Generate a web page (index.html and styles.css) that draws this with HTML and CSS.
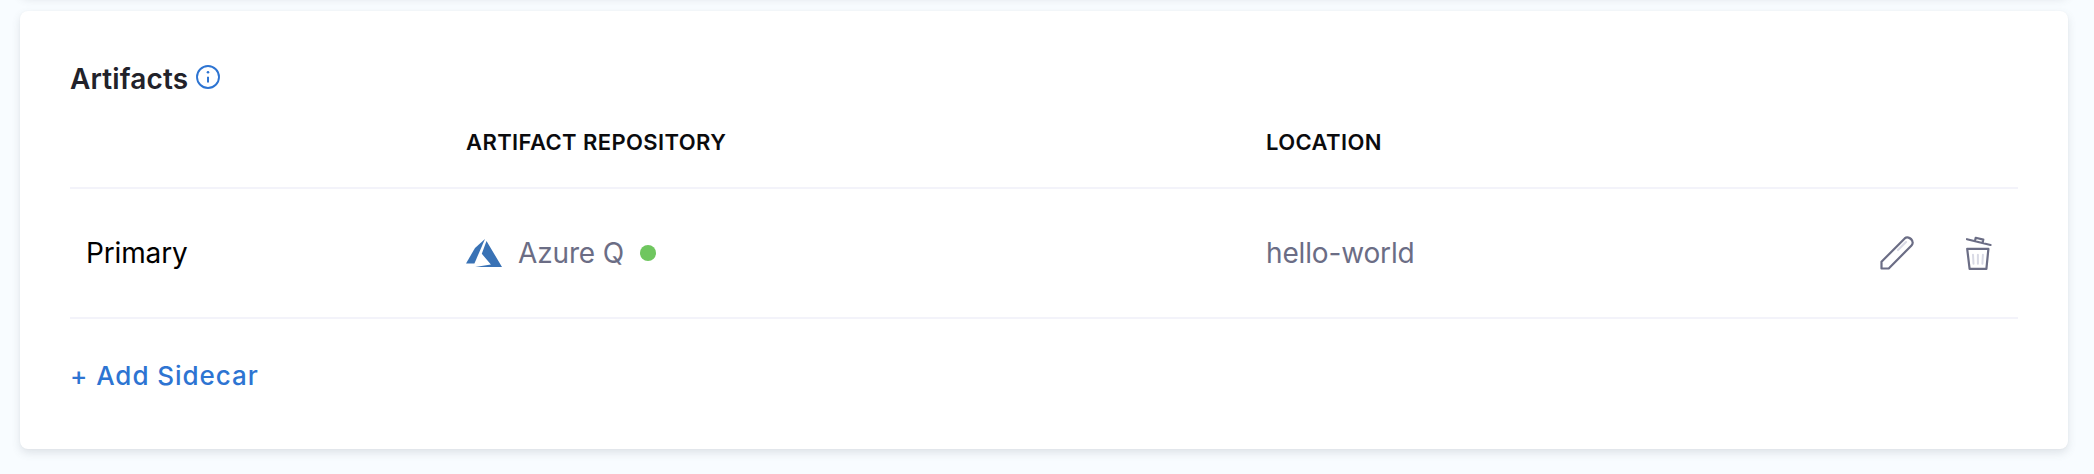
FILE: index.html
```html
<!DOCTYPE html>
<html lang="en">
<head>
<meta charset="utf-8">
<title>Artifacts</title>
<link rel="stylesheet" href="styles.css">
</head>
<body>
<div class="card card-previous"></div>
<section class="card artifacts">
  <header class="title">
    <h2>Artifacts</h2>
    <svg class="info" viewBox="0 0 24 24" fill="none" stroke="#2d74d2" stroke-width="1.9">
      <circle cx="12" cy="12" r="11"/>
      <path d="M12 11.800v5.600" stroke-width="2"/>
      <circle cx="12" cy="7.200" r="1.300" fill="#2d74d2" stroke="none"/>
    </svg>
  </header>
  <div class="grid head">
    <span></span>
    <span>ARTIFACT REPOSITORY</span>
    <span>LOCATION</span>
  </div>
  <div class="grid row">
    <span class="name">Primary</span>
    <span class="repo">
      <svg class="azure" viewBox="0 0 36 28" fill="#3972b5">
        <path d="M19 0 9 9 0 24.500h8.400z"/>
        <path d="M20.500 2 15.800 14.800l9.100 10.600L9.200 28H36z"/>
      </svg>
      <span class="repo-name">Azure Q</span>
      <i class="status"></i>
    </span>
    <span class="location">hello-world</span>
    <span class="actions">
      <svg class="pencil" viewBox="0 0 34 34" fill="none" stroke="#6b6d85" stroke-width="2.200" stroke-linejoin="round" stroke-linecap="round">
        <path d="M1.500 25.800 24.700 2.400a4 4 0 0 1 3.800-.8q3.300 1.100 4 4a4 4 0 0 1-1 3.900L8.700 32.500H1.500z"/>
        <path d="m18 14 8-8" stroke="#d9dae5"/>
      </svg>
      <svg class="trash" viewBox="0 0 26 34" fill="none" stroke="#6b6d85" stroke-width="2.200" stroke-linejoin="round" stroke-linecap="round">
        <path d="M1 3.200 24.500 9M9 5 9.700 1.800l7.600 1.800-.7 3.300"/>
        <path d="M1.200 12.900h21.200l-2 20H3.600z"/>
        <path d="m7 18.800.5 9M11.900 18.800v9M16.900 18.800l-.5 9" stroke="#d9dae5" stroke-width="2"/>
      </svg>
    </span>
  </div>
  <a class="add">+ Add Sidecar</a>
</section>
</body>
</html>
```
FILE: styles.css
```css
* { box-sizing: border-box; }
body {
  margin: 0;
  height: 474px;
  padding: 0 26px 0 20px;
  background: #f8fcff;
  font-family: Inter, sans-serif;
  overflow: hidden;
  display: flow-root;
}
.card {
  background: #fff;
  border-radius: 8px;
  box-shadow: 0 4px 8px rgba(96, 97, 112, .16), 0 0 2px rgba(40, 41, 61, .04);
}
.card-previous {
  height: 20px;
  margin-top: -25px;
}
.artifacts {
  height: 438px;
  margin-top: 16px;
  padding: 50px;
}
.title {
  display: flex;
  align-items: center;
  gap: 8px;
  height: 36px;
}
.title h2 {
  margin: 0;
  font-size: 28px;
  line-height: 36px;
  font-weight: 600;
  letter-spacing: .13px;
  color: #22222a;
}
.info {
  width: 24px;
  height: 24px;
  margin-bottom: 4px;
}
.grid {
  display: grid;
  grid-template-columns: 396px 800px 1fr auto;
  border-bottom: 2px solid #f3f3fa;
}
.head {
  margin-top: 31px;
  height: 61px;
  font-size: 22px;
  line-height: 28px;
  font-weight: 600;
  letter-spacing: .4px;
  color: #0b0b0d;
}
.row {
  height: 130px;
  align-items: center;
  font-size: 28px;
  line-height: 36px;
  letter-spacing: -.15px;
  color: #6b6d85;
}
.name {
  padding-left: 16px;
  color: #000;
}
.repo {
  display: flex;
  align-items: center;
}
.azure {
  width: 36px;
  height: 28px;
  margin-right: 16px;
}
.status {
  width: 16px;
  height: 16px;
  margin-left: 16px;
  border-radius: 50%;
  background: #6fc65f;
}
.actions {
  display: flex;
  align-items: center;
  gap: 52px;
  padding-right: 26px;
}
.pencil { width: 34px; height: 34px; }
.trash { width: 26px; height: 34px; }
.add {
  display: block;
  margin-top: 41px;
  font-size: 26px;
  line-height: 32px;
  font-weight: 550;
  letter-spacing: .95px;
  color: #2d74d2;
}
```
